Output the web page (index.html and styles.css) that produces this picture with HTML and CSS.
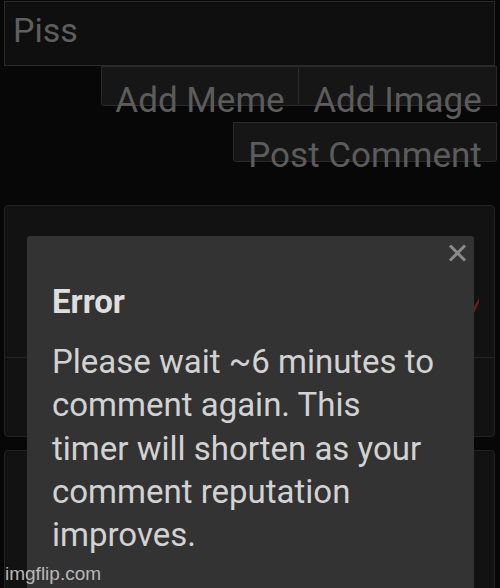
FILE: index.html
```html
<!DOCTYPE html>
<html lang="en">
<head>
    <meta charset="UTF-8">
    <meta name="viewport" content="width=device-width, initial-scale=1.0">
    <title>Comment error</title>
    <link rel="stylesheet" href="styles.css">
</head>
<body>
    <div class="comment-form">
        <div class="comment-input">Piss</div>
        <div class="form-row">
            <button class="form-btn btn-meme">Add Meme</button>
            <button class="form-btn btn-image">Add Image</button>
        </div>
        <div class="form-row">
            <button class="form-btn btn-post">Post Comment</button>
        </div>
    </div>

    <div class="comments">
        <div class="comment-card">
            <div class="comment-top">
                <span class="vote-mark"></span>
            </div>
            <div class="comment-bottom"></div>
        </div>
        <div class="comment-card card-next"></div>
    </div>

    <!-- error popup -->
    <div class="popup">
        <span class="popup-close">
            <svg width="19" height="18" viewBox="0 0 19 18">
                <path d="M2 1.5 L17 16.5 M17 1.5 L2 16.5" stroke="#8a8a8a" stroke-width="3" fill="none"/>
            </svg>
        </span>
        <h2 class="popup-title">Error</h2>
        <p class="popup-text">Please wait ~6 minutes to comment again. This timer will shorten as your comment reputation improves.</p>
    </div>

    <div class="watermark">imgflip.com</div>
</body>
</html>
```

FILE: styles.css
```css
* {
    margin: 0;
    padding: 0;
    box-sizing: border-box;
}

body {
    font-family: Roboto, "Liberation Sans", sans-serif;
    width: 500px;
    height: 588px;
    background: #070707;
    overflow: hidden;
    position: relative;
}

.comment-form {
    padding: 1px 4px 0 4px;
}

.comment-input {
    width: 491px;
    height: 65px;
    background: #0f0f0f;
    border: 1px solid #2a2a2a;
    color: #5f5f5f;
    font-size: 34px;
    line-height: 34px;
    padding: 11px 0 0 8px;
}

.form-row {
    display: flex;
    justify-content: flex-end;
    margin-right: -1px;
}

.form-btn {
    font-family: Roboto, "Liberation Sans", sans-serif;
    height: 40px;
    background: #161616;
    border: 1px solid #2a2a2a;
    color: #5c5c5c;
    font-size: 35px;
    line-height: 35px;
    padding: 16px 0 0 0;
    text-align: center;
    white-space: nowrap;
    overflow: visible;
    vertical-align: top;
}

.btn-meme {
    width: 198px;
    border-radius: 0 0 0 3px;
}

.btn-image {
    width: 198px;
    border-left: none;
}

.btn-post {
    width: 264px;
    margin-top: 16px;
    padding-top: 15px;
    border-radius: 0 0 3px 3px;
}

.comments {
    padding: 43px 5px 0 4px;
}

.comment-card {
    background: #121212;
    border: 1px solid #222;
    border-radius: 4px;
    height: 232px;
    display: flex;
    flex-direction: column;
}

.comment-top {
    height: 152px;
    border-bottom: 1px solid #242424;
    position: relative;
}

.vote-mark {
    position: absolute;
    left: 465px;
    top: 92px;
    width: 9px;
    height: 16px;
    background: #6b1a1a;
    clip-path: polygon(100% 0, 100% 30%, 40% 100%, 0 100%);
}

.comment-bottom {
    flex: 1;
}

.card-next {
    margin-top: 13px;
    height: 200px;
}

.popup {
    position: absolute;
    left: 27px;
    top: 236px;
    width: 447px;
    height: 400px;
    background: #333333;
    border-radius: 3px 3px 0 0;
    padding: 44px 30px 0 25px;
}

.popup-close {
    position: absolute;
    right: 7px;
    top: 8px;
    width: 19px;
    height: 18px;
}

.popup-title {
    font-size: 33px;
    font-weight: 700;
    line-height: 43px;
    color: #dedede;
}

.popup-text {
    margin-top: 17px;
    font-size: 33px;
    line-height: 43.3px;
    color: #d2d2d2;
}

.watermark {
    position: absolute;
    left: 5px;
    bottom: 3px;
    font-family: "Liberation Sans", Arial, sans-serif;
    font-size: 19px;
    color: #b8b8b8;
}
```
